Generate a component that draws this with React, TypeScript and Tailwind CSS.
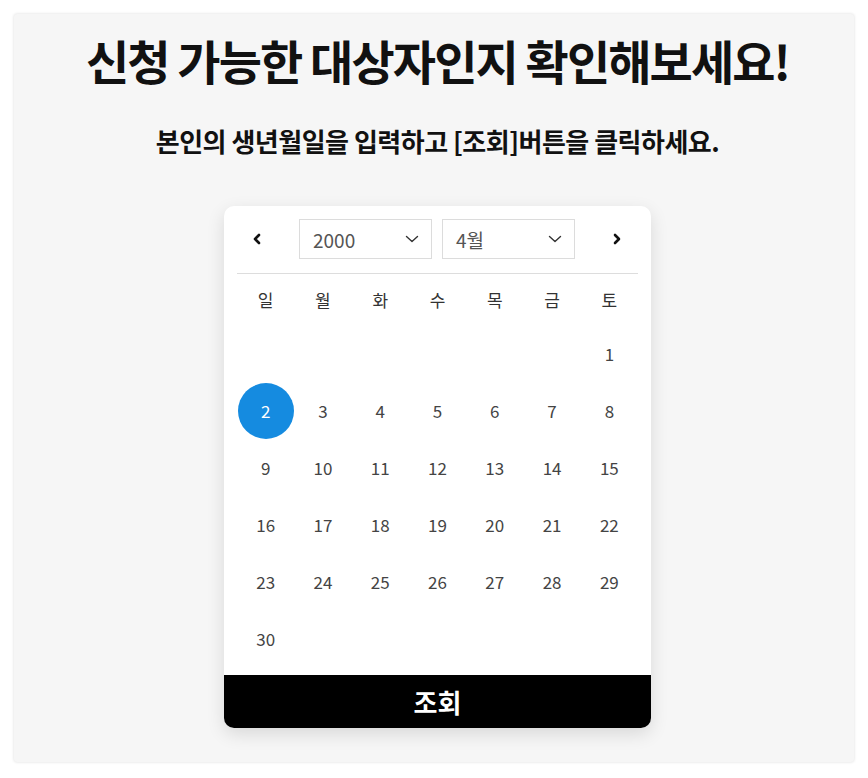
import { useState } from 'react';

const WEEKDAYS = ['일', '월', '화', '수', '목', '금', '토'];
const font = { fontFamily: '"Noto Sans CJK KR", "Noto Sans", sans-serif' };

function Chevron({ dir }: { dir: 'left' | 'right' }) {
  return (
    <svg width="10" height="12" viewBox="0 0 10 12" fill="none">
      {dir === 'left' ? (
        <path d="M7 2 L3 6 L7 10" stroke="#111" strokeWidth="2.6" strokeLinecap="round" strokeLinejoin="round" />
      ) : (
        <path d="M3 2 L7 6 L3 10" stroke="#111" strokeWidth="2.6" strokeLinecap="round" strokeLinejoin="round" />
      )}
    </svg>
  );
}

function SelectBox({ value }: { value: string }) {
  return (
    <div className="w-[133px] h-[40px] border border-[#dcdcdc] bg-white flex items-center justify-between pl-[13px] pr-[12px]">
      <span className="text-[19px] text-[#555] leading-none">{value}</span>
      <svg width="14" height="8" viewBox="0 0 14 8" fill="none">
        <path d="M1.5 1.5 L7 6.5 L12.5 1.5" stroke="#333" strokeWidth="1.4" strokeLinecap="round" strokeLinejoin="round" />
      </svg>
    </div>
  );
}

export default function App() {
  const [selected, setSelected] = useState(2);
  // April 2000 starts on Saturday
  const cells: (number | null)[] = [...Array(6).fill(null), ...Array.from({ length: 30 }, (_, i) => i + 1)];

  return (
    <div className="min-h-screen bg-white p-[14px]" style={font}>
      <div className="h-[748px] bg-[#f6f6f6] rounded-[3px] shadow-[0_0_3px_rgba(0,0,0,0.15)] flex flex-col items-center pt-[21px] pl-[7px]">
        <h1 className="text-[47px] font-bold text-[#111] tracking-[-1.9px] leading-[50px]">
          신청 가능한 대상자인지 확인해보세요!
        </h1>
        <p className="mt-[41px] text-[26px] font-bold text-[#111] tracking-[-0.5px] leading-[30px]">
          본인의 생년월일을 입력하고 [조회]버튼을 클릭하세요.
        </p>

        {/* Calendar card */}
        <div className="mt-[50px] w-[427px] bg-white rounded-[10px] shadow-[0_6px_18px_rgba(0,0,0,0.12)] overflow-hidden">
          <div className="px-[13px] pt-[13px]">
            <div className="flex items-center h-[40px]">
              <button className="w-[40px] flex justify-center">
                <Chevron dir="left" />
              </button>
              <div className="flex gap-[10px] ml-[22px]">
                <SelectBox value="2000" />
                <SelectBox value="4월" />
              </div>
              <button className="w-[40px] flex justify-center ml-[22px]">
                <Chevron dir="right" />
              </button>
            </div>
            <div className="mt-[14px] border-t border-[#dddddd]" />
            <div className="grid grid-cols-7 h-[51px] items-center">
              {WEEKDAYS.map((d) => (
                <div key={d} className="text-center text-[17px] text-[#333]">{d}</div>
              ))}
            </div>
            <div className="grid grid-cols-7 pb-[8px]">
              {cells.map((d, i) => (
                <div key={i} className="h-[57px] flex items-center justify-center">
                  {d && (
                    <button
                      onClick={() => setSelected(d)}
                      className={`w-[56px] h-[56px] rounded-full flex items-center justify-center text-[17px] ${
                        selected === d ? 'bg-[#158be0] text-white' : 'text-[#444]'
                      }`}
                    >
                      {d}
                    </button>
                  )}
                </div>
              ))}
            </div>
          </div>
          <button className="w-full h-[53px] bg-black text-white text-[26px] font-bold flex items-center justify-center">
            조회
          </button>
        </div>
      </div>
    </div>
  );
}
